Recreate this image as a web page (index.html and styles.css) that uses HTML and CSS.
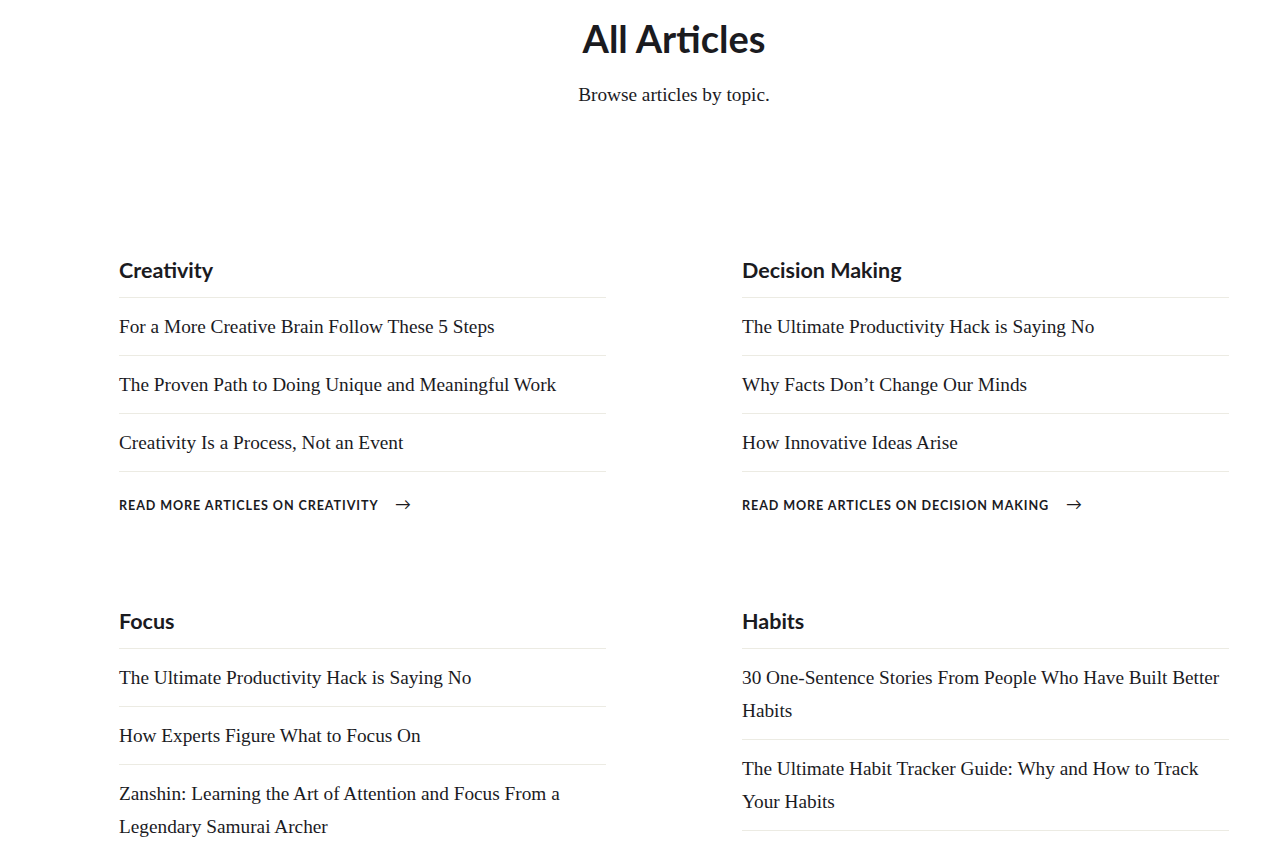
FILE: index.html
```html
<!DOCTYPE html>
<html lang="en">
    <head>
        <meta charset="UTF-8">
        <meta name="viewport" content="width=device-width, initial-scale=1.0">
        <title>All Articles</title>
        <link rel="stylesheet" href="styles.css">
    </head>
    <body>
        <div class="clPagina">
            <!-- Cabecalho da pagina -->
            <header class="clCabecalho">
                <h1 class="clTitulo">All Articles</h1>
                <p class="clSubtitulo">Browse articles by topic.</p>
            </header>
            <!-- Grade de topicos -->
            <div class="clGrade">
                <section class="clTopico">
                    <h2 class="clTopicoTitulo">Creativity</h2>
                    <ul class="clLista">
                        <li><a href="#">For a More Creative Brain Follow These 5 Steps</a></li>
                        <li><a href="#">The Proven Path to Doing Unique and Meaningful Work</a></li>
                        <li><a href="#">Creativity Is a Process, Not an Event</a></li>
                    </ul>
                    <a class="clMais" href="#">Read more articles on Creativity <span class="clSeta">&rarr;</span></a>
                </section>
                <section class="clTopico">
                    <h2 class="clTopicoTitulo">Decision Making</h2>
                    <ul class="clLista">
                        <li><a href="#">The Ultimate Productivity Hack is Saying No</a></li>
                        <li><a href="#">Why Facts Don’t Change Our Minds</a></li>
                        <li><a href="#">How Innovative Ideas Arise</a></li>
                    </ul>
                    <a class="clMais" href="#">Read more articles on Decision Making <span class="clSeta">&rarr;</span></a>
                </section>
                <section class="clTopico">
                    <h2 class="clTopicoTitulo">Focus</h2>
                    <ul class="clLista">
                        <li><a href="#">The Ultimate Productivity Hack is Saying No</a></li>
                        <li><a href="#">How Experts Figure What to Focus On</a></li>
                        <li><a href="#">Zanshin: Learning the Art of Attention and Focus From a Legendary Samurai Archer</a></li>
                    </ul>
                    <a class="clMais" href="#">Read more articles on Focus <span class="clSeta">&rarr;</span></a>
                </section>
                <section class="clTopico">
                    <h2 class="clTopicoTitulo">Habits</h2>
                    <ul class="clLista">
                        <li><a href="#">30 One-Sentence Stories From People Who Have Built Better Habits</a></li>
                        <li><a href="#">The Ultimate Habit Tracker Guide: Why and How to Track Your Habits</a></li>
                        <li><a href="#">How to Build New Habits by Taking Advantage of Old Ones</a></li>
                    </ul>
                    <a class="clMais" href="#">Read more articles on Habits <span class="clSeta">&rarr;</span></a>
                </section>
            </div>
        </div>
    </body>
</html>
```

FILE: styles.css
```css
*{
    margin: 0px;
    padding: 0px;
    box-sizing: border-box;
}
body{
    background-color: white;
    color: #1b1b1f;
    font-family: "Liberation Serif", serif;
}
a{
    color: inherit;
    text-decoration: none;
}
.clPagina{
    width: 1110px;
    margin-left: 119px;
}
.clCabecalho{
    text-align: center;
    padding-top: 15px;
}
.clTitulo{
    font-family: Lato, sans-serif;
    font-weight: 700;
    font-size: 38px;
    line-height: 46px;
}
.clSubtitulo{
    font-size: 19.3px;
    line-height: 28px;
    margin-top: 20px;
}
.clGrade{
    display: grid;
    grid-template-columns: 487px 487px;
    column-gap: 136px;
    row-gap: 89px;
    margin-top: 147px;
}
.clTopicoTitulo{
    font-family: Lato, sans-serif;
    font-weight: 700;
    font-size: 21.5px;
    line-height: 28px;
    padding-bottom: 13px;
    border-bottom: 1px solid #ecebe3;
}
.clLista{
    list-style: none;
}
.clLista li{
    font-size: 19.3px;
    line-height: 33px;
    padding-top: 12px;
    padding-bottom: 12px;
    border-bottom: 1px solid #ecebe3;
}
.clMais{
    display: block;
    margin-top: 20px;
    font-family: Lato, sans-serif;
    font-weight: 700;
    font-size: 12.6px;
    letter-spacing: 0.9px;
    text-transform: uppercase;
    line-height: 24px;
}
.clSeta{
    font-weight: 400;
    font-size: 16px;
    margin-left: 13px;
}
```
